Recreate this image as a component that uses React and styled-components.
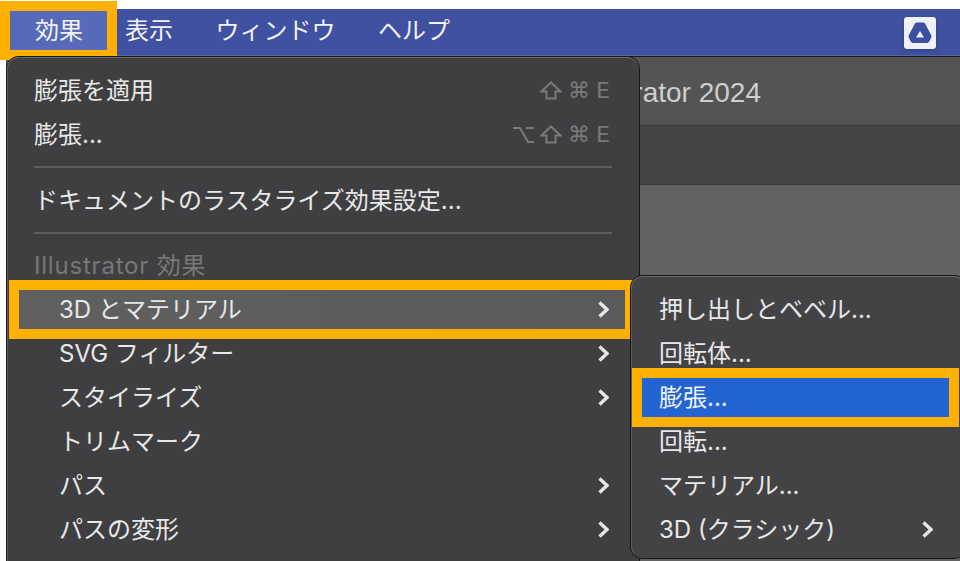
import styled, { createGlobalStyle } from 'styled-components'

const GlobalStyle = createGlobalStyle`
  html, body {
    margin: 0;
    background: #fff;
  }
  body {
    font-family: "Inter", "Noto Sans CJK JP", sans-serif;
  }
`

const topRows = [
  { label: '膨張を適用', keys: ['shift', '⌘', 'E'] },
  { label: '膨張...', keys: ['option', 'shift', '⌘', 'E'] }
]

const effectRows = [
  { label: '3D とマテリアル', arrow: true, state: 'hover' },
  { label: 'SVG フィルター', arrow: true },
  { label: 'スタイライズ', arrow: true },
  { label: 'トリムマーク' },
  { label: 'パス', arrow: true },
  { label: 'パスの変形', arrow: true }
]

const subRows = [
  { label: '押し出しとベベル...' },
  { label: '回転体...' },
  { label: '膨張...', state: 'selected' },
  { label: '回転...' },
  { label: 'マテリアル...' },
  { label: '3D (クラシック)', arrow: true }
]

function Chevron () {
  return (
    <ChevronIcon viewBox='0 0 11 17'>
      <path d='M1.5 1.5 L9 8.5 L1.5 15.5' />
    </ChevronIcon>
  )
}

function ShiftKey () {
  return (
    <KeyIcon width='22' height='19' viewBox='0 0 22 19'>
      <path d='M11 1.5 L20.5 10.5 H15.5 V17.5 H6.5 V10.5 H1.5 Z' />
    </KeyIcon>
  )
}

function OptionKey () {
  return (
    <KeyIcon width='21' height='18' viewBox='0 0 21 18'>
      <path d='M0 2 H7 L15 16 H21 M13 2 H21' />
    </KeyIcon>
  )
}

function Keys ({ keys }) {
  return (
    <Shortcut>
      {keys.map((key) => {
        if (key === 'shift') return <ShiftKey key={key} />
        if (key === 'option') return <OptionKey key={key} />
        return <span key={key}>{key}</span>
      })}
    </Shortcut>
  )
}

function Logo () {
  return (
    <LogoBox>
      <svg width='32' height='32' viewBox='0 0 32 32'>
        <polygon
          points='13,8 19,8 25,19.5 23,23.5 9,23.5 7,19.5'
          fill='#3d4f9f'
          stroke='#3d4f9f'
          strokeWidth='5'
          strokeLinejoin='round'
        />
        <polygon points='16,14 20,20.5 12,20.5' fill='#eef0f6' />
      </svg>
    </LogoBox>
  )
}

function Row ({ row, $indent }) {
  return (
    <MenuRow $indent={$indent} $state={row.state}>
      <Label>{row.label}</Label>
      {row.keys && <Keys keys={row.keys} />}
      {row.arrow && <Chevron />}
    </MenuRow>
  )
}

export default function App () {
  return (
    <Page>
      <GlobalStyle />
      <MenuBar>
        <BarItem $active>効果</BarItem>
        <BarItem>表示</BarItem>
        <BarItem>ウィンドウ</BarItem>
        <BarItem>ヘルプ</BarItem>
        <Logo />
      </MenuBar>

      <Backdrop>
        <TitleBand>Adobe Illustrator 2024</TitleBand>
        <ToolBand />
        <CanvasBand />
      </Backdrop>

      <MainMenu>
        {topRows.map((row) => (
          <Row key={row.label} row={row} />
        ))}
        <Separator />
        <Row row={{ label: 'ドキュメントのラスタライズ効果設定...' }} />
        <Separator />
        <Heading>
          <Label>Illustrator 効果</Label>
        </Heading>
        {effectRows.map((row) => (
          <Row key={row.label} row={row} $indent />
        ))}
      </MainMenu>

      <SubMenu>
        {subRows.map((row) => (
          <Row key={row.label} row={row} />
        ))}
      </SubMenu>
    </Page>
  )
}

const Page = styled.div`
  position: relative;
  width: 960px;
  height: 561px;
  padding-top: 9px;
  box-sizing: border-box;
  overflow: hidden;
  background: #fff;
`

const MenuBar = styled.div`
  display: flex;
  align-items: center;
  gap: 42.5px;
  height: 47px;
  box-sizing: border-box;
  padding: 2px 24px 6px 10px;
  color: #f1f2f6;
  background: #3f51a0;
  border-bottom: 1px solid #56649f;
`

const BarItem = styled.div`
  position: relative;
  font-size: 24px;
  line-height: 39px;
  height: 39px;

  ${(p) => p.$active && `
    padding: 0 24px 0 25px;
    margin-right: -24.5px;
    background: #5769b9;

    &::after {
      content: '';
      position: absolute;
      inset: -10px;
      border: 10px solid #ffb000;
    }
  `}
`

const LogoBox = styled.div`
  width: 32px;
  height: 32px;
  margin-left: auto;
  margin-top: 6px;
  border-radius: 3px;
  background: #eef0f6;
  box-shadow: 0 1px 4px rgba(20, 30, 80, 0.35);

  svg {
    display: block;
  }
`

const Backdrop = styled.div`
  display: flex;
  flex-direction: column;
  height: 505px;
  margin-left: 6px;
  background: #1c1c1c;
  padding-top: 1px;
  box-sizing: border-box;
`

const TitleBand = styled.div`
  display: flex;
  align-items: center;
  justify-content: flex-end;
  height: 65px;
  padding: 3px 199px 0 0;
  font-family: "Liberation Sans", sans-serif;
  font-size: 28px;
  color: #cfcfcf;
  background: #545454;
  border-bottom: 1px solid #3a3a3a;
`

const ToolBand = styled.div`
  height: 58px;
  background: #444;
  border-bottom: 1px solid #383838;
`

const CanvasBand = styled.div`
  flex: 1;
  background: #626262;
`

const Panel = styled.div`
  position: absolute;
  display: flex;
  flex-direction: column;
  gap: 5px;
  box-sizing: border-box;
  padding-top: 14px;
  border-radius: 12px;
  color: #e8e8e8;
  box-shadow: 0 0 0 1px #161616, inset 0 1px 0 #6b6b6b, inset 1px 0 0 #5c5c5c;
`

const MainMenu = styled(Panel)`
  top: 57px;
  left: 7px;
  width: 632px;
  height: 540px;
  background: #3f3f41;
`

const SubMenu = styled(Panel)`
  top: 276px;
  left: 631px;
  width: 335px;
  padding-right: 6px;
  padding-bottom: 9px;
  background: #434345;
`

const MenuRow = styled.div`
  position: relative;
  display: flex;
  align-items: center;
  justify-content: space-between;
  flex: none;
  height: 39px;
  margin: 0 14px 0 12px;
  padding: 0 16px 0 ${(p) => (p.$indent ? 40 : 15)}px;
  font-size: 24px;
  white-space: nowrap;

  ${SubMenu} & {
    margin: 0 11px;
    padding-left: 17px;
  }

  ${(p) => p.$state === 'hover' && 'background: linear-gradient(90deg, #606060, #5a5a5a);'}
  ${(p) => p.$state === 'selected' && 'background: #2264d1; color: #f2f5fb;'}

  ${(p) => p.$state && `
    &::after {
      content: '';
      position: absolute;
      inset: -10px;
      border: 10px solid #ffb000;
    }
  `}
`

const Label = styled.span`
  margin-bottom: 4px;
`

const Heading = styled(MenuRow)`
  color: #777;
  letter-spacing: 0.8px;
`

const Shortcut = styled.span`
  display: flex;
  align-items: center;
  gap: 6px;
  margin-right: -1px;
  font-family: "DejaVu Sans", sans-serif;
  font-size: 22px;
  color: #7a7a7a;
`

const KeyIcon = styled.svg`
  flex: none;
  fill: none;
  stroke: #7a7a7a;
  stroke-width: 2;
`

const Separator = styled.div`
  flex: none;
  height: 2px;
  margin: 7px 27px 7.5px;
  background: #5f5f5f;
`

const ChevronIcon = styled.svg`
  flex: none;
  width: 11px;
  height: 17px;
  fill: none;
  stroke: #e6e6e6;
  stroke-width: 3.4;
`
